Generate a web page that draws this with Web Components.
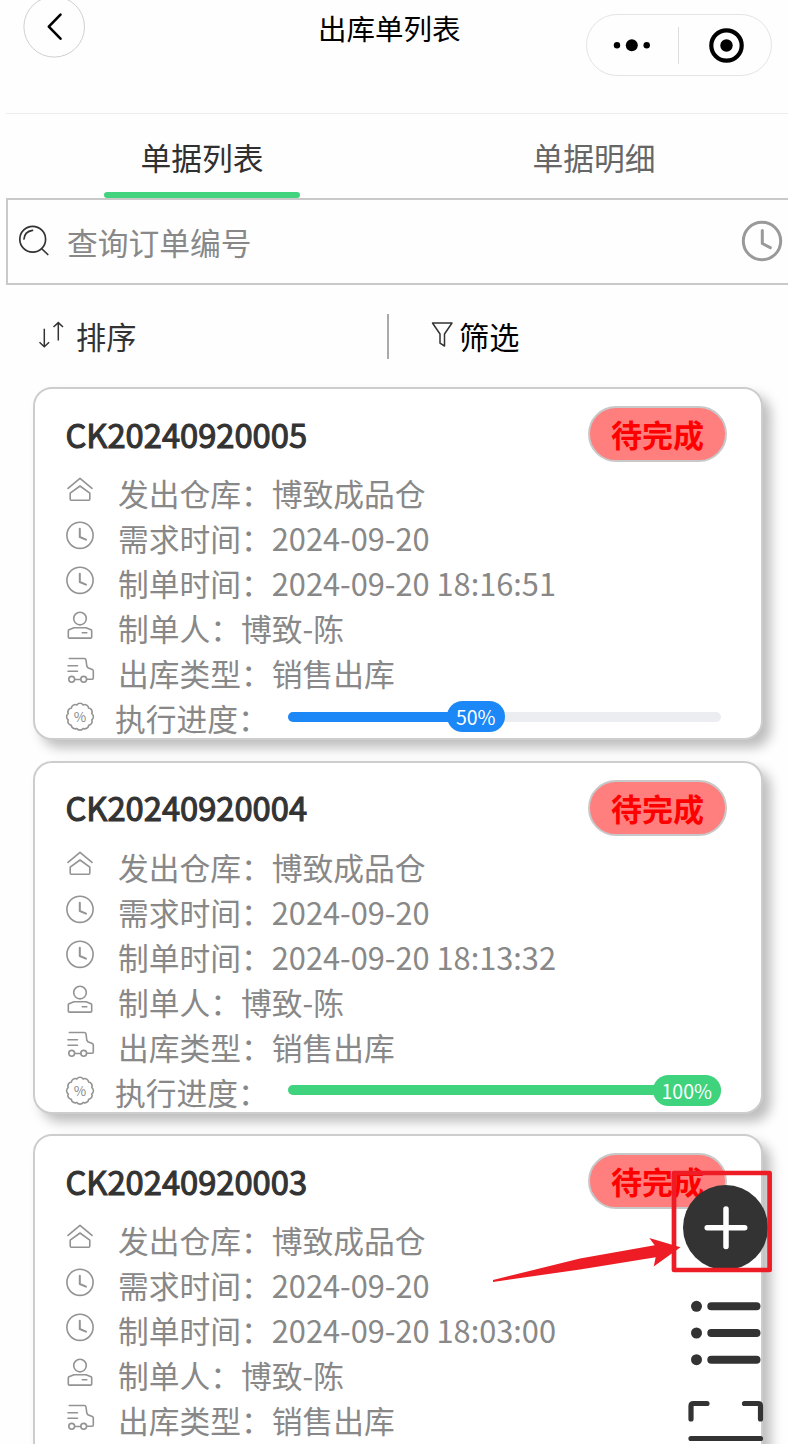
<!DOCTYPE html>
<html lang="zh-CN">
<head>
<meta charset="utf-8">
<title>出库单列表</title>
<style>
  html, body {
    margin: 0;
    background: #fefefe;
  }
  body {
    width: 788px;
    height: 1444px;
    overflow: hidden;
    font-family: "Noto Sans CJK SC", sans-serif;
    font-size: 30.75px;
    color: #333;
  }
</style>
</head>
<body>

<order-page>
  <nav-bar slot="nav">出库单列表</nav-bar>
  <tab-bar slot="tabs">
    <tab-item active>单据列表</tab-item>
    <tab-item>单据明细</tab-item>
  </tab-bar>
  <search-box slot="search">查询订单编号</search-box>
  <sort-bar slot="tools">
    <span slot="sort">排序</span>
    <span slot="filter">筛选</span>
  </sort-bar>

  <order-card number="CK20240920005" status="待完成">
    <info-row icon="house">发出仓库：博致成品仓</info-row>
    <info-row icon="clock">需求时间：2024-09-20</info-row>
    <info-row icon="clock">制单时间：2024-09-20 18:16:51</info-row>
    <info-row icon="user">制单人：博致-陈</info-row>
    <info-row icon="truck">出库类型：销售出库</info-row>
    <info-row icon="percent">执行进度：<progress-line slot="extra" value="50"></progress-line></info-row>
  </order-card>

  <order-card number="CK20240920004" status="待完成">
    <info-row icon="house">发出仓库：博致成品仓</info-row>
    <info-row icon="clock">需求时间：2024-09-20</info-row>
    <info-row icon="clock">制单时间：2024-09-20 18:13:32</info-row>
    <info-row icon="user">制单人：博致-陈</info-row>
    <info-row icon="truck">出库类型：销售出库</info-row>
    <info-row icon="percent">执行进度：<progress-line slot="extra" value="100"></progress-line></info-row>
  </order-card>

  <order-card number="CK20240920003" status="待完成">
    <info-row icon="house">发出仓库：博致成品仓</info-row>
    <info-row icon="clock">需求时间：2024-09-20</info-row>
    <info-row icon="clock">制单时间：2024-09-20 18:03:00</info-row>
    <info-row icon="user">制单人：博致-陈</info-row>
    <info-row icon="truck">出库类型：销售出库</info-row>
  </order-card>
</order-page>

<float-tools></float-tools>
<red-marker></red-marker>

<script>
function define(name, html, setup) {
  const template = document.createElement('template');
  template.innerHTML = html;
  customElements.define(name, class extends HTMLElement {
    constructor() {
      super();
      this.attachShadow({ mode: 'open' });
      this.shadowRoot.appendChild(template.content.cloneNode(true));
    }
    connectedCallback() {
      if (setup) setup(this, this.shadowRoot);
    }
  });
}

// wavy edge of the percent badge
function scallop(cx, cy, r, n) {
  let d = '';
  for (let i = 0; i <= n; i++) {
    const a = (i + 0.5) * 2 * Math.PI / n;
    const x = (cx + r * Math.cos(a)).toFixed(2);
    const y = (cy + r * Math.sin(a)).toFixed(2);
    d += i ? `A3.9 3.9 0 0 1 ${x} ${y}` : `M${x} ${y}`;
  }
  return d + 'Z';
}

const icons = {
  house: '<path d="M3 13.4 15 3.4l12 10"/><path d="M5.2 18.2 15 11l9.8 7.2V24a1.2 1.2 0 0 1-1.2 1.2H6.4A1.2 1.2 0 0 1 5.2 24Z"/>',
  clock: '<circle cx="15" cy="15.3" r="13.1"/><path d="M14.8 8.8v8.2l6.2 2.6" stroke-width="2"/>',
  user: '<circle cx="15" cy="8.6" r="6.3"/><path d="M9 17.7h12l5 2q.7.4.7 1.2v6q0 1.2-1.2 1.2h-21q-1.2 0-1.2-1.2v-6q0-.8.7-1.2ZM17.3 22.7h4.5"/>',
  truck: '<path d="M4.3 3.5h15q1.5 0 1.7 1.5l.8 6 1 1.7 4.5 1.8q1 .5 1 1.5v7q0 1.2-1.2 1.2h-5M3 10.7h9.5M3 16.2h9.5M9.7 24.5h6"/><circle cx="6.7" cy="24.3" r="2.9"/><circle cx="18.7" cy="24.3" r="2.9"/>',
  percent: `<path d="${scallop(15, 16.7, 12.2, 12)}"/><text x="15" y="21.7" text-anchor="middle" font-size="13.5" fill="#8c8c8c" stroke="none">%</text>`
};

define('order-page', `<style>
  :host {
    display: flex;
    flex-direction: column;
    width: 784px;
    margin-left: 6px;
  }
  main {
    display: flex;
    flex-direction: column;
    gap: 20.5px;
    padding: 0 26.5px;
  }
</style>
<slot name="nav"></slot>
<slot name="tabs"></slot>
<slot name="search"></slot>
<slot name="tools"></slot>
<main><slot></slot></main>`);

define('nav-bar', `<style>
  :host {
    display: flex;
    align-items: flex-start;
    box-sizing: border-box;
    height: 114px;
    padding: 0 18.5px 0 17px;
    border-bottom: 1px solid #ededed;
    color: #000;
    font-size: 28.5px;
  }
  .back {
    flex: none;
    margin-top: -5px;
  }
  .title {
    margin-left: 232px;
    line-height: 56px;
  }
  .capsule {
    display: flex;
    align-items: center;
    box-sizing: border-box;
    width: 186px;
    height: 62px;
    margin: 14px 0 0 auto;
    border: 1px solid #e4e4e4;
    border-radius: 31px;
  }
  .capsule svg:first-child {
    border-right: 1px solid #dcdcdc;
  }
</style>
<svg class="back" width="63" height="63" fill="none">
  <circle cx="31.2" cy="31.8" r="30.3" stroke="#d0d0d0"/>
  <path d="M37.5 19.7 25.8 31.7l11.7 12" stroke="#000" stroke-width="2.6" stroke-linecap="round" stroke-linejoin="round"/>
</svg>
<span class="title"><slot></slot></span>
<div class="capsule">
  <svg width="91" height="37"><circle cx="30" cy="18.2" r="3.2"/><circle cx="44.8" cy="18.2" r="6"/><circle cx="59.7" cy="18.2" r="3.2"/></svg>
  <svg width="92" height="37"><circle cx="47.5" cy="18.5" r="15.2" fill="none" stroke="#000" stroke-width="4.2"/><circle cx="47.5" cy="18.5" r="6.2"/></svg>
</div>`);

define('tab-bar', `<style>
  :host {
    display: grid;
    grid-template-columns: 1fr 1fr;
    height: 84px;
  }
</style>
<slot></slot>`);

define('tab-item', `<style>
  :host {
    display: flex;
    flex-direction: column;
    align-items: center;
    justify-content: space-between;
    color: #666;
  }
  :host([active]) {
    color: #303030;
  }
  span {
    height: 74px;
    padding-top: 4px;
    line-height: 78px;
  }
  i {
    width: 196px;
    height: 6px;
    border-radius: 3px;
  }
  :host([active]) i {
    background: #41d37d;
  }
</style>
<span><slot></slot></span><i></i>`);

define('search-box', `<style>
  :host {
    display: flex;
    align-items: center;
    box-sizing: border-box;
    height: 87px;
    padding: 0 4px 0 9px;
    border: 2px solid #c9c9c9;
    color: #888;
  }
  span {
    flex: 1;
    margin-left: 16px;
    line-height: 45px;
    padding-bottom: 1px;
  }
  svg {
    margin-top: -1px;
    fill: none;
    stroke-linecap: round;
    stroke-linejoin: round;
  }
</style>
<svg width="34" height="34" stroke="#333" stroke-width="1.7">
  <circle cx="15.7" cy="15.3" r="12.9"/>
  <path d="M25 25l5.8 5.5M7 15q.5-7.5 8.5-8.7"/>
</svg>
<span><slot></slot></span>
<svg width="44" height="44" stroke="#999" stroke-width="3">
  <circle cx="22" cy="22" r="18.7"/>
  <path d="M22.3 11.5v13l8 4.2"/>
</svg>`);

define('sort-bar', `<style>
  :host {
    display: grid;
    grid-template-columns: 1fr 1fr;
    align-items: center;
    height: 102.4px;
    font-size: 30.2px;
  }
  div {
    display: flex;
    align-items: center;
    height: 45px;
    line-height: 45px;
  }
  .sort {
    box-sizing: border-box;
    width: 383px;
    padding-left: 31px;
    gap: 9px;
    border-right: 2px solid #aaa;
  }
  .filter {
    padding-left: 32px;
    gap: 5px;
    color: #000;
  }
  slot {
    display: block;
    padding-top: 1px;
  }
  svg {
    margin-top: -3px;
    fill: none;
    stroke: #333;
    stroke-width: 1.5;
  }
</style>
<div class="sort">
  <svg width="30" height="30"><path d="M7.3 8.7v18M2.5 22.3l4.8 4.4 4.8-4.4M21.3 20.5v-18M16.5 7l4.8-4.4L26 7"/></svg>
  <slot name="sort"></slot>
</div>
<div class="filter">
  <svg width="24" height="30"><path d="M2.5 3h19.500l-7.500 11v12l-4.500-2.800v-9.200Z" stroke-linejoin="round"/></svg>
  <slot name="filter"></slot>
</div>`);

define('order-card', `<style>
  :host {
    display: block;
    box-sizing: border-box;
    width: 730px;
    height: 353px;
    padding: 0 34px 0 30px;
    background: #fff;
    border: 2px solid #cdcdcd;
    border-radius: 19px;
    box-shadow: 8px 8px 12px rgba(0, 0, 0, .25);
  }
  header {
    display: flex;
    justify-content: space-between;
    align-items: center;
    box-sizing: border-box;
    height: 82.4px;
  }
  .number {
    margin-left: 1px;
    padding-top: 6px;
    font-size: 32.7px;
    line-height: 48px;
    -webkit-text-stroke: 1.1px #333;
  }
  .status {
    box-sizing: border-box;
    width: 139px;
    height: 56px;
    margin-top: 7px;
    padding: 2px 0 0 1px;
    border: 2px solid #c8c8c8;
    border-radius: 28px;
    background: #ff7f7f;
    color: #f00;
    font-size: 31px;
    font-weight: bold;
    line-height: 48px;
    text-align: center;
  }
</style>
<header>
  <span class="number"></span>
  <span class="status"></span>
</header>
<slot></slot>`, (host, root) => {
  root.querySelector('.number').textContent = host.getAttribute('number');
  root.querySelector('.status').textContent = host.getAttribute('status');
});

define('info-row', `<style>
  :host {
    display: flex;
    align-items: center;
    height: 45px;
    line-height: 45px;
    color: #888;
    white-space: nowrap;
  }
  span {
    margin-top: -3.4px;
  }
  svg {
    flex: none;
    margin: -8.4px 23.5px 0 0;
    overflow: visible;
    fill: none;
    stroke: #939393;
    stroke-width: 1.6;
    stroke-linecap: round;
    stroke-linejoin: round;
  }
  :host([icon=percent]) svg {
    margin-right: 20.5px;
  }
</style>
<svg width="30" height="30"></svg>
<span><slot></slot></span>
<slot name="extra"></slot>`, (host, root) => {
  root.querySelector('svg').innerHTML = icons[host.getAttribute('icon')];
});

define('progress-line', `<style>
  :host {
    display: flex;
    align-items: center;
    width: 433px;
    height: 10px;
    margin: -4.6px 0 0 19px;
    border-radius: 5px;
    background: #ebedf0;
    --bar: #1c87f6;
  }
  :host([value="100"]) {
    --bar: #3ed37c;
  }
  .fill {
    flex: none;
    height: 10px;
    border-radius: 5px;
    background: var(--bar);
  }
  .pill {
    flex: none;
    width: 58px;
    height: 31px;
    border-radius: 16px;
    background: var(--bar);
    color: #fff;
    font-size: 19.5px;
    line-height: 32px;
    text-align: center;
  }
</style>
<div class="fill"></div><div class="pill"></div>`, (host, root) => {
  const value = Number(host.getAttribute('value'));
  const fill = root.querySelector('.fill');
  const pill = root.querySelector('.pill');
  fill.style.width = value + '%';
  pill.textContent = value + '%';
  // full bar keeps the pill inside the track
  if (value === 100) pill.style.width = '68px';
  pill.style.marginLeft = value === 100 ? '-68px' : '-57.5px';
});

define('float-tools', `<style>
  :host {
    position: absolute;
    left: 682px;
    top: 1184px;
    display: block;
    width: 88px;
    height: 260px;
    overflow: hidden;
  }
  svg {
    display: block;
    fill: #333;
    stroke: #333;
    stroke-linecap: round;
    stroke-linejoin: round;
  }
</style>
<svg width="88" height="260">
  <circle cx="43.5" cy="43.5" r="42.5" stroke="none"/>
  <path d="M44 25v37.5M25.200 43.700h37.500" stroke="#fff" stroke-width="5.500"/>
  <g stroke="none"><circle cx="14.5" cy="122.3" r="5.5"/><circle cx="14.5" cy="149" r="5.5"/><circle cx="14.5" cy="175.7" r="5.5"/></g>
  <path d="M29.3 122.3h45.2M29.3 149h45.2M29.3 175.7h45.2" stroke-width="8"/>
  <path d="M9 235v-13q0-2.5 2.5-2.5H25M62.5 219.500H76q2.500 0 2.500 2.500v13M9 254.500h69.500" fill="none" stroke-width="5.200"/>
</svg>`);

define('red-marker', `<style>
  :host {
    position: absolute;
    left: 490px;
    top: 1168px;
    display: block;
  }
  svg {
    display: block;
  }
</style>
<svg width="286" height="118">
  <rect x="184" y="5" width="95.6" height="97" fill="none" stroke="#ee1c25" stroke-width="4.7" stroke-linejoin="round"/>
  <path d="M3 112 90 90.5 164.700 77.300 159.300 70 190.500 79.300 163.700 98.500 165.700 89.200 90 101.500 3 113.900Z" fill="#ee1c25"/>
</svg>`);
</script>
</body>
</html>
